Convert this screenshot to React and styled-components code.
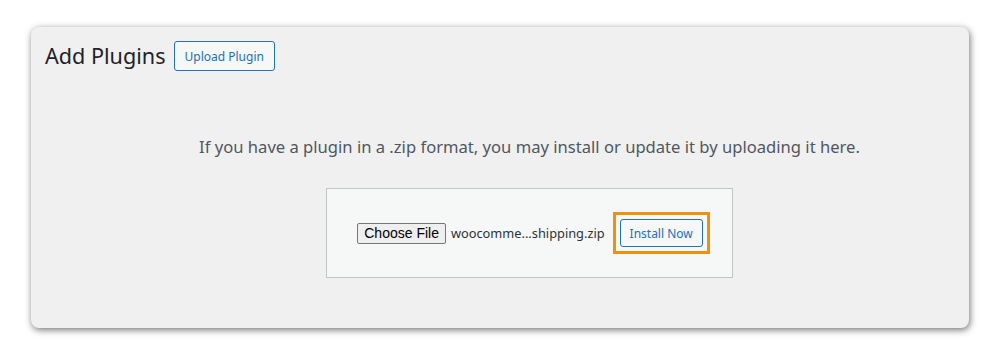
import React from 'react'
import styled, { createGlobalStyle } from 'styled-components';

const GlobalStyle = createGlobalStyle`
  body {
    margin: 0;
    background: #ffffff;
    font-family: "Noto Sans", "Open Sans", sans-serif;
  }
`;

const Page = styled.div`
  width: 1000px;
  height: 359px;
  padding: 27px 31px 0;
  box-sizing: border-box;
`;

const Panel = styled.div`
  height: 301px;
  background: #f0f0f1;
  border-radius: 8px;
  box-shadow: 1px 2px 7px rgba(0, 0, 0, 0.55);
  padding: 14px 14px 0;
  box-sizing: border-box;
`;

const Header = styled.div`
  display: flex;
  align-items: center;
  gap: 8px;
`;

const Title = styled.h1`
  margin: 0;
  font-size: 21.6px;
  font-weight: 400;
  color: #1d2327;
  line-height: 30px;
`;

const WpButton = styled.button`
  font-family: inherit;
  font-size: 12px;
  color: #2271b1;
  background: #f6f7f7;
  border: 1px solid #2271b1;
  border-radius: 3px;
  height: ${(p) => p.h || 30}px;
  padding: 0 ${(p) => p.px || 10}px;
  cursor: pointer;
`;

const Content = styled.div`
  display: flex;
  flex-direction: column;
  align-items: center;
  padding-left: 59px;
  margin-top: 64px;
`;

const Help = styled.p`
  margin: 0;
  font-size: 16.6px;
  color: #50575e;
  line-height: 24px;
`;

const UploadBox = styled.div`
  margin-top: 29px;
  width: 407px;
  height: 90px;
  box-sizing: border-box;
  background: #f6f7f7;
  border: 1px solid #c3c4c7;
  display: flex;
  align-items: center;
  justify-content: center;
  padding-left: 8px;
`;

const FileButton = styled.button`
  font-family: "Liberation Sans", Arial, sans-serif;
  font-size: 14px;
  color: #000;
  background: #efefef;
  border: 1px solid #767676;
  border-radius: 2px;
  height: 21px;
  padding: 0 6px;
`;

const FileName = styled.span`
  font-size: 12.8px;
  color: #2c3338;
  margin-left: 5px;
`;

const Highlight = styled.div`
  margin-left: 8px;
  border: 3px solid #f0900f;
  padding: 4px 4px;
  display: flex;
`;

const App = () => {
  return (
    <Page>
      <GlobalStyle />
      <Panel>
        <Header>
          <Title>Add Plugins</Title>
          <WpButton>Upload Plugin</WpButton>
        </Header>
        <Content>
          <Help>If you have a plugin in a .zip format, you may install or update it by uploading it here.</Help>
          <UploadBox>
            <FileButton>Choose File</FileButton>
            <FileName>woocomme...shipping.zip</FileName>
            <Highlight>
              <WpButton h={28} px={9}>Install Now</WpButton>
            </Highlight>
          </UploadBox>
        </Content>
      </Panel>
    </Page>
  );
};

export default App
